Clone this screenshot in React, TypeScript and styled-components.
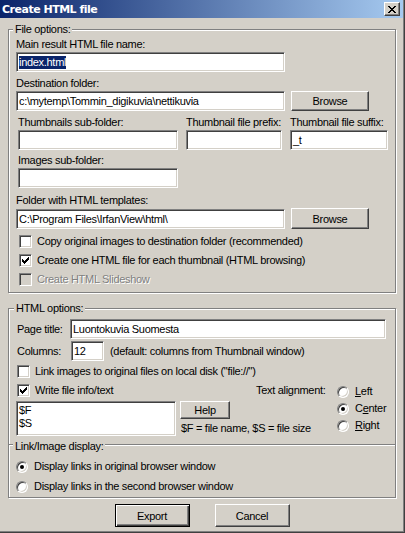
import React from "react";
import styled, { createGlobalStyle, css } from "styled-components";

const face = "#d4d0c8";
const shadow = "#808080";
const darkShadow = "#404040";
const highlight = "#ffffff";

const GlobalStyle = createGlobalStyle`
  html, body {
    margin: 0;
    padding: 0;
    background: ${face};
  }
  body {
    font-family: "Liberation Sans", Arial, sans-serif;
    font-size: 11px;
    letter-spacing: -0.3px;
    color: #000;
  }
`;

const sunken = css`
  border: 1px solid;
  border-color: ${shadow} ${highlight} ${highlight} ${shadow};
  box-shadow: inset 1px 1px ${darkShadow}, inset -1px -1px ${face};
`;

const Window = styled.div`
  box-sizing: border-box;
  width: 405px;
  height: 533px;
  display: flex;
  flex-direction: column;
  background: ${face};
  border-right: 1px solid ${darkShadow};
  border-bottom: 1px solid ${darkShadow};
  box-shadow: inset -1px -1px ${shadow};
`;

const TitleBar = styled.div`
  height: 18px;
  margin-right: 1px;
  padding: 0 3px 0 2px;
  display: flex;
  align-items: center;
  justify-content: space-between;
  background: linear-gradient(to right, #0a246a, #a6caf0);
`;

const Title = styled.span`
  font-family: "DejaVu Sans", Verdana, sans-serif;
  font-weight: bold;
  font-size: 11px;
  letter-spacing: -0.5px;
  color: #fff;
`;

const CloseButton = styled.div`
  box-sizing: border-box;
  width: 16px;
  height: 14px;
  display: flex;
  align-items: center;
  justify-content: center;
  background: ${face};
  border: 1px solid;
  border-color: ${highlight} ${darkShadow} ${darkShadow} ${highlight};
  box-shadow: inset -1px -1px ${shadow};
`;

const Body = styled.div`
  flex: 1;
  display: flex;
  flex-direction: column;
  padding: 5px 8px 0 8px;
`;

const Group = styled.fieldset<{ $pad: string; $mt?: number; $openBottom?: boolean }>`
  margin: ${(p) => p.$mt ?? 0}px 0 0 0;
  padding: ${(p) => p.$pad};
  min-width: 0;
  border: 1px solid ${shadow};
  ${(p) => p.$openBottom && "border-bottom: none;"}
  box-shadow: inset 1px 1px ${highlight}, 1px 1px ${highlight};
  display: flex;
  flex-direction: column;
`;

const Legend = styled.legend<{ $low?: boolean }>`
  margin-left: -3px;
  padding: ${(p) => (p.$low ? "4px 2px 0" : "0 2px")};
  line-height: 13px;
  background: ${face};
`;

const Caption = styled.div<{ $mt?: number }>`
  margin-top: ${(p) => p.$mt ?? 0}px;
  margin-bottom: 1px;
  line-height: 13px;
  white-space: nowrap;
`;

const Text = styled.span<{ $w?: number; $ml?: number }>`
  flex: none;
  width: ${(p) => (p.$w ? `${p.$w}px` : "auto")};
  margin-left: ${(p) => p.$ml ?? 0}px;
  line-height: 13px;
  white-space: nowrap;
`;

const Row = styled.div<{ $mt?: number; $gap?: number; $align?: string }>`
  display: flex;
  align-items: ${(p) => p.$align ?? "center"};
  gap: ${(p) => p.$gap ?? 0}px;
  margin-top: ${(p) => p.$mt ?? 0}px;
`;

const Column = styled.div<{ $w?: number; $ml?: number; $mt?: number; $gap?: number }>`
  display: flex;
  flex-direction: column;
  flex: none;
  width: ${(p) => (p.$w ? `${p.$w}px` : "auto")};
  margin-left: ${(p) => p.$ml ?? 0}px;
  margin-top: ${(p) => p.$mt ?? 0}px;
  gap: ${(p) => p.$gap ?? 0}px;
`;

const TextBox = styled.div<{ $w: number; $h?: number; $ml?: number }>`
  box-sizing: border-box;
  flex: none;
  width: ${(p) => p.$w}px;
  height: ${(p) => p.$h ?? 20}px;
  margin-left: ${(p) => p.$ml ?? 0}px;
  padding: 0 2px;
  display: flex;
  align-items: center;
  white-space: nowrap;
  overflow: hidden;
  background: #fff;
  ${sunken}
`;

const TextArea = styled.div<{ $w: number; $h: number; $ml?: number }>`
  box-sizing: border-box;
  flex: none;
  width: ${(p) => p.$w}px;
  height: ${(p) => p.$h}px;
  margin-left: ${(p) => p.$ml ?? 0}px;
  padding: 2px 2px 0;
  line-height: 13px;
  background: #fff;
  ${sunken}
`;

const Selected = styled.span`
  background: #0a246a;
  color: #fff;
  line-height: 13px;
`;

const Button = styled.button<{ $w: number; $h: number; $default?: boolean }>`
  box-sizing: border-box;
  flex: none;
  width: ${(p) => p.$w}px;
  height: ${(p) => p.$h}px;
  padding: 0;
  font-family: inherit;
  font-size: 11px;
  letter-spacing: inherit;
  color: #000;
  background: ${face};
  border: 1px solid;
  border-color: ${highlight} ${darkShadow} ${darkShadow} ${highlight};
  box-shadow: inset -1px -1px ${shadow};
  ${(p) =>
    p.$default &&
    css`
      border-color: #000;
      box-shadow: inset 1px 1px ${highlight}, inset -1px -1px ${darkShadow},
        inset -2px -2px ${shadow};
    `}
`;

const Box = styled.span<{ $disabled?: boolean }>`
  box-sizing: border-box;
  flex: none;
  width: 13px;
  height: 13px;
  display: flex;
  align-items: center;
  justify-content: center;
  background: ${(p) => (p.$disabled ? face : "#fff")};
  ${sunken}
`;

const OptionRow = styled.label<{ $mt?: number; $ml?: number; $gap?: number; $disabled?: boolean }>`
  display: flex;
  align-items: center;
  gap: ${(p) => p.$gap ?? 5}px;
  margin-top: ${(p) => p.$mt ?? 0}px;
  margin-left: ${(p) => p.$ml ?? 0}px;
  height: 13px;
  line-height: 13px;
  white-space: nowrap;
  ${(p) =>
    p.$disabled &&
    css`
      color: ${shadow};
      text-shadow: 1px 1px ${highlight};
    `}
`;

const RadioMark = styled.span<{ $on?: boolean }>`
  box-sizing: border-box;
  position: relative;
  flex: none;
  width: 12px;
  height: 12px;
  border-radius: 50%;
  background: #fff;
  ${sunken}
  ${(p) =>
    p.$on &&
    css`
      &::after {
        content: "";
        position: absolute;
        left: 3px;
        top: 3px;
        width: 4px;
        height: 4px;
        border-radius: 50%;
        background: #000;
      }
    `}
`;

const Footer = styled.div`
  display: flex;
  justify-content: center;
  gap: 25px;
  margin-top: 6px;
`;

// 7x7 pixel tick used by checked boxes
const Tick = () => (
  <svg width="7" height="7" viewBox="0 0 7 7" shapeRendering="crispEdges">
    {[2, 3, 4, 3, 2, 1, 0].map((y, x) => (
      <rect key={x} x={x} y={y} width="1" height="3" fill="#000" />
    ))}
  </svg>
);

const CloseGlyph = () => (
  <svg width="8" height="7" viewBox="0 0 8 7" shapeRendering="crispEdges">
    {[0, 1, 2, 3, 4, 5, 6].map((y) => {
      const a = y <= 3 ? y : 6 - y;
      return (
        <g key={y} fill="#000">
          <rect x={a} y={y} width="2" height="1" />
          <rect x={6 - a} y={y} width="2" height="1" />
        </g>
      );
    })}
  </svg>
);

const Check = ({
  checked,
  disabled,
  label,
  mt,
  ml,
}: {
  checked?: boolean;
  disabled?: boolean;
  label: string;
  mt?: number;
  ml?: number;
}) => (
  <OptionRow $mt={mt} $ml={ml} $disabled={disabled}>
    <Box $disabled={disabled}>{checked && <Tick />}</Box>
    <span>{label}</span>
  </OptionRow>
);

const Radio = ({
  on,
  children,
  mt,
  gap,
}: {
  on?: boolean;
  children: React.ReactNode;
  mt?: number;
  gap?: number;
}) => (
  <OptionRow $mt={mt} $gap={gap}>
    <RadioMark $on={on} />
    <span>{children}</span>
  </OptionRow>
);

export default function App() {
  return (
    <>
      <GlobalStyle />
      <Window>
        <TitleBar>
          <Title>Create HTML file</Title>
          <CloseButton>
            <CloseGlyph />
          </CloseButton>
        </TitleBar>

        <Body>
          <Group $pad="2px 7px 6px 7px">
            <Legend>File options:</Legend>
            <Caption>Main result HTML file name:</Caption>
            <TextBox $w={269}>
              <Selected>index.html</Selected>
            </TextBox>

            <Caption $mt={5}>Destination folder:</Caption>
            <Row $gap={6}>
              <TextBox $w={269}>c:\mytemp\Tommin_digikuvia\nettikuvia</TextBox>
              <Button $w={78} $h={20}>
                Browse
              </Button>
            </Row>

            <Row $mt={5} $gap={8} $align="flex-start">
              <Column $w={160} $ml={2}>
                <Caption>Thumbnails sub-folder:</Caption>
                <TextBox $w={160} />
              </Column>
              <Column $w={96}>
                <Caption>Thumbnail file prefix:</Caption>
                <TextBox $w={96} />
              </Column>
              <Column $w={98}>
                <Caption>Thumbnail file suffix:</Caption>
                <TextBox $w={98}>_t</TextBox>
              </Column>
            </Row>

            <Column $ml={2} $mt={4}>
              <Caption>Images sub-folder:</Caption>
              <TextBox $w={160} />
            </Column>

            <Caption $mt={6}>Folder with HTML templates:</Caption>
            <Row $gap={6}>
              <TextBox $w={269}>C:\Program Files\IrfanView\html\</TextBox>
              <Button $w={78} $h={21}>
                Browse
              </Button>
            </Row>

            <Check mt={6} ml={3} label="Copy original images to destination folder (recommended)" />
            <Check mt={6} ml={3} checked label="Create one HTML file for each thumbnail (HTML browsing)" />
            <Check mt={6} ml={3} disabled label="Create HTML Slideshow" />
          </Group>

          <Group $pad="4px 7px 8px 8px" $mt={9} $openBottom>
            <Legend>HTML options:</Legend>
            <Row>
              <Text $w={53}>Page title:</Text>
              <TextBox $w={316}>Luontokuvia Suomesta</TextBox>
            </Row>
            <Row $mt={2}>
              <Text $w={54}>Columns:</Text>
              <TextBox $w={33}>12</TextBox>
              <Text $ml={6}>(default: columns from Thumbnail window)</Text>
            </Row>
            <Check mt={4} label={'Link images to original files on local disk ("file://")'} />

            <Row $mt={6} $align="flex-start">
              <Column $w={239}>
                <Check checked label="Write file info/text" />
                <Row $mt={4} $gap={4} $align="flex-start">
                  <TextArea $w={160} $h={35} $ml={-1}>
                    $F
                    <br />
                    $S
                  </TextArea>
                  <Column>
                    <Button $w={50} $h={18}>
                      Help
                    </Button>
                    <Text $ml={1} style={{ marginTop: 3 }}>
                      $F = file name, $S = file size
                    </Text>
                  </Column>
                </Row>
              </Column>
              <Text $w={81}>Text alignment:</Text>
              <Column $mt={1} $gap={4}>
                <Radio gap={6}>
                  <u>L</u>eft
                </Radio>
                <Radio gap={6} on>
                  C<u>e</u>nter
                </Radio>
                <Radio gap={6}>
                  <u>R</u>ight
                </Radio>
              </Column>
            </Row>
          </Group>

          <Group $pad="7px 7px 4px 7px" $mt={-8}>
            <Legend $low>Link/Image display:</Legend>
            <Radio on gap={6}>
              Display links in original browser window
            </Radio>
            <Radio mt={7} gap={6}>
              Display links in the second browser window
            </Radio>
          </Group>

          <Footer>
            <Button $w={75} $h={23} $default>
              Export
            </Button>
            <Button $w={75} $h={23}>
              Cancel
            </Button>
          </Footer>
        </Body>
      </Window>
    </>
  );
}
